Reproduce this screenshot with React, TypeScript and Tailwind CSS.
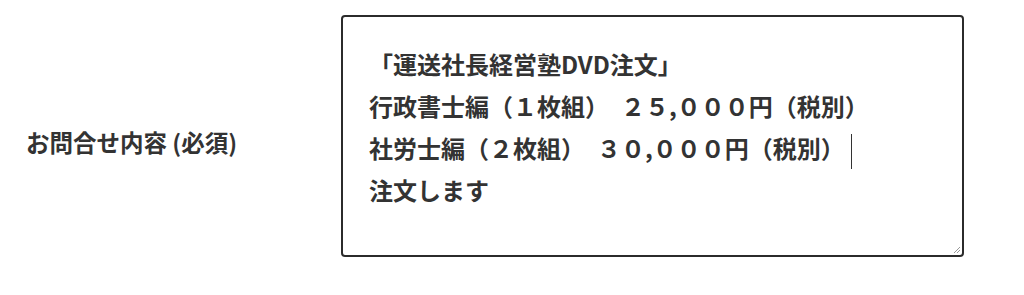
import React from 'react';

const lines = [
  '「運送社長経営塾DVD注文」',
  '行政書士編（１枚組）　２５,０００円（税別）',
  '社労士編（２枚組）　３０,０００円（税別）',
  '注文します',
];

const App: React.FC = () => {
  return (
    <div className="w-[1024px] h-[295px] bg-white flex items-start pt-[15px] text-[#333]" style={{ fontFamily: '"Noto Sans CJK JP", "Noto Sans", sans-serif' }}>
      <div className="w-[341px] h-[242px] flex items-center pl-[26px] pt-[14px]">
        <label className="text-[23.5px] font-bold leading-none">お問合せ内容 (必須)</label>
      </div>
      <div className="relative w-[623px] h-[242px] border-2 border-[#2b2b2b] rounded-[4px] pl-[26px] pt-[26px]">
        {lines.map((line, i) => (
          <div key={i} className="text-[24px] font-bold leading-[42px] whitespace-pre">
            {line}
            {i === 2 && <span className="inline-block w-px h-[35px] bg-[#333] align-middle ml-[6px]" />}
          </div>
        ))}
        {/* resize grip */}
        <svg className="absolute right-[1px] bottom-[1px]" width="10" height="10" viewBox="0 0 10 10">
          <path d="M9 3 L3 9 M9 6 L6 9" stroke="#999" strokeWidth="1" />
        </svg>
      </div>
    </div>
  );
};

export default App;
